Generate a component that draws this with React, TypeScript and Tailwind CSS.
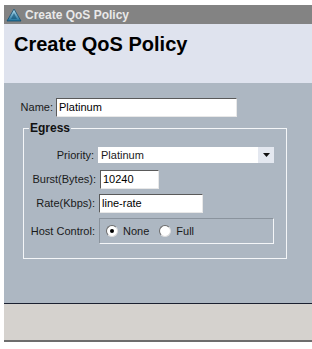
import React from 'react';

const font = { fontFamily: '"Liberation Sans", Tahoma, Arial, sans-serif' };

const inputCls =
  'h-full bg-white border border-t-[#5a5a5a] border-l-[#5a5a5a] border-r-[#e8e8e8] border-b-[#e8e8e8] px-[2px] text-[11px] text-black leading-none flex items-center';

const Radio = ({ checked, label }: { checked?: boolean; label: string }) => (
  <div className="flex items-center gap-[5px]">
    <span className="w-[12px] h-[12px] rounded-full bg-white border border-t-[#6a6a6a] border-l-[#6a6a6a] border-r-[#dcdcdc] border-b-[#dcdcdc] flex items-center justify-center">
      {checked && <span className="w-[4px] h-[4px] rounded-full bg-black" />}
    </span>
    <span>{label}</span>
  </div>
);

export default function App() {
  return (
    <div className="w-[312px] h-[349px] bg-white pt-[5px] pl-[4px] overflow-hidden" style={font}>
      <div className="flex flex-col w-[308px]">
        {/* title bar */}
        <div className="h-[19px] bg-[#838383] flex items-center pl-[2px] gap-[3px]">
          <svg width="16" height="14" viewBox="0 0 16 14">
            <defs>
              <linearGradient id="g" x1="0" y1="0" x2="0" y2="1">
                <stop offset="0" stopColor="#bfe6f5" />
                <stop offset="1" stopColor="#1d6f9a" />
              </linearGradient>
            </defs>
            <polygon points="8,1 15,13 1,13" fill="url(#g)" stroke="#0f4e72" strokeWidth="0.8" />
            <polygon points="8,5 11,11 5,11" fill="#0f4e72" opacity="0.6" />
          </svg>
          <span className="text-[12px] font-bold text-[#e9e9e9]">Create QoS Policy</span>
        </div>
        {/* header */}
        <div className="h-[59px] bg-[#dfe3ee] pl-[10px] pt-[10px]">
          <h1 className="text-[20px] font-bold text-black leading-none">Create QoS Policy</h1>
        </div>
        {/* body */}
        <div className="h-[220px] bg-[#adb7c2] pt-[15px] text-[11px] text-[#1a1a1a] whitespace-nowrap">
          <div className="flex items-center h-[19px]">
            <span className="w-[52px] text-right pr-[3px]">Name:</span>
            <div className={inputCls + ' w-[181px]'}>Platinum</div>
          </div>
          <fieldset className="ml-[19px] mt-[5px] w-[264px] h-[137px] border border-[#f4f6f8] px-[4px]">
            <legend className="font-bold text-[12px] text-[#111] px-[1px] leading-none ml-[1px]">Egress</legend>
            <div className="flex flex-col mt-[13px]">
              <div className="flex items-center h-[16px]">
                <span className="w-[70px] text-right pr-[4px]">Priority:</span>
                <div className="w-[176px] h-full bg-white flex items-center justify-between">
                  <span className="pl-[3px]">Platinum</span>
                  <span className="w-[16px] h-full bg-[#e4e8f0] flex items-center justify-center">
                    <svg width="7" height="4" viewBox="0 0 7 4"><polygon points="0,0 7,0 3.5,4" fill="#111" /></svg>
                  </span>
                </div>
              </div>
              <div className="flex items-center h-[19px] mt-[7px]">
                <span className="w-[72px] text-right pr-[4px]">Burst(Bytes):</span>
                <div className={inputCls + ' w-[59px]'}>10240</div>
              </div>
              <div className="flex items-center h-[19px] mt-[5px]">
                <span className="w-[71px] text-right pr-[4px]">Rate(Kbps):</span>
                <div className={inputCls + ' w-[104px]'}>line-rate</div>
              </div>
              <div className="flex items-center h-[26px] mt-[5px]">
                <span className="w-[71px] text-right pr-[4px]">Host Control:</span>
                <div className="w-[175px] h-full border border-[#f4f6f8] border-t-[#8a939d] border-l-[#8a939d] flex items-center pl-[6px] gap-[10px]">
                  <Radio checked label="None" />
                  <Radio label="Full" />
                </div>
              </div>
            </div>
          </fieldset>
        </div>
        <div className="h-[1px] bg-[#1a2030]" />
        {/* bottom */}
        <div className="h-[36px] bg-[#d5d2ce]" />
        <div className="h-[2px] bg-[#6d6d6d]" />
      </div>
    </div>
  );
}
